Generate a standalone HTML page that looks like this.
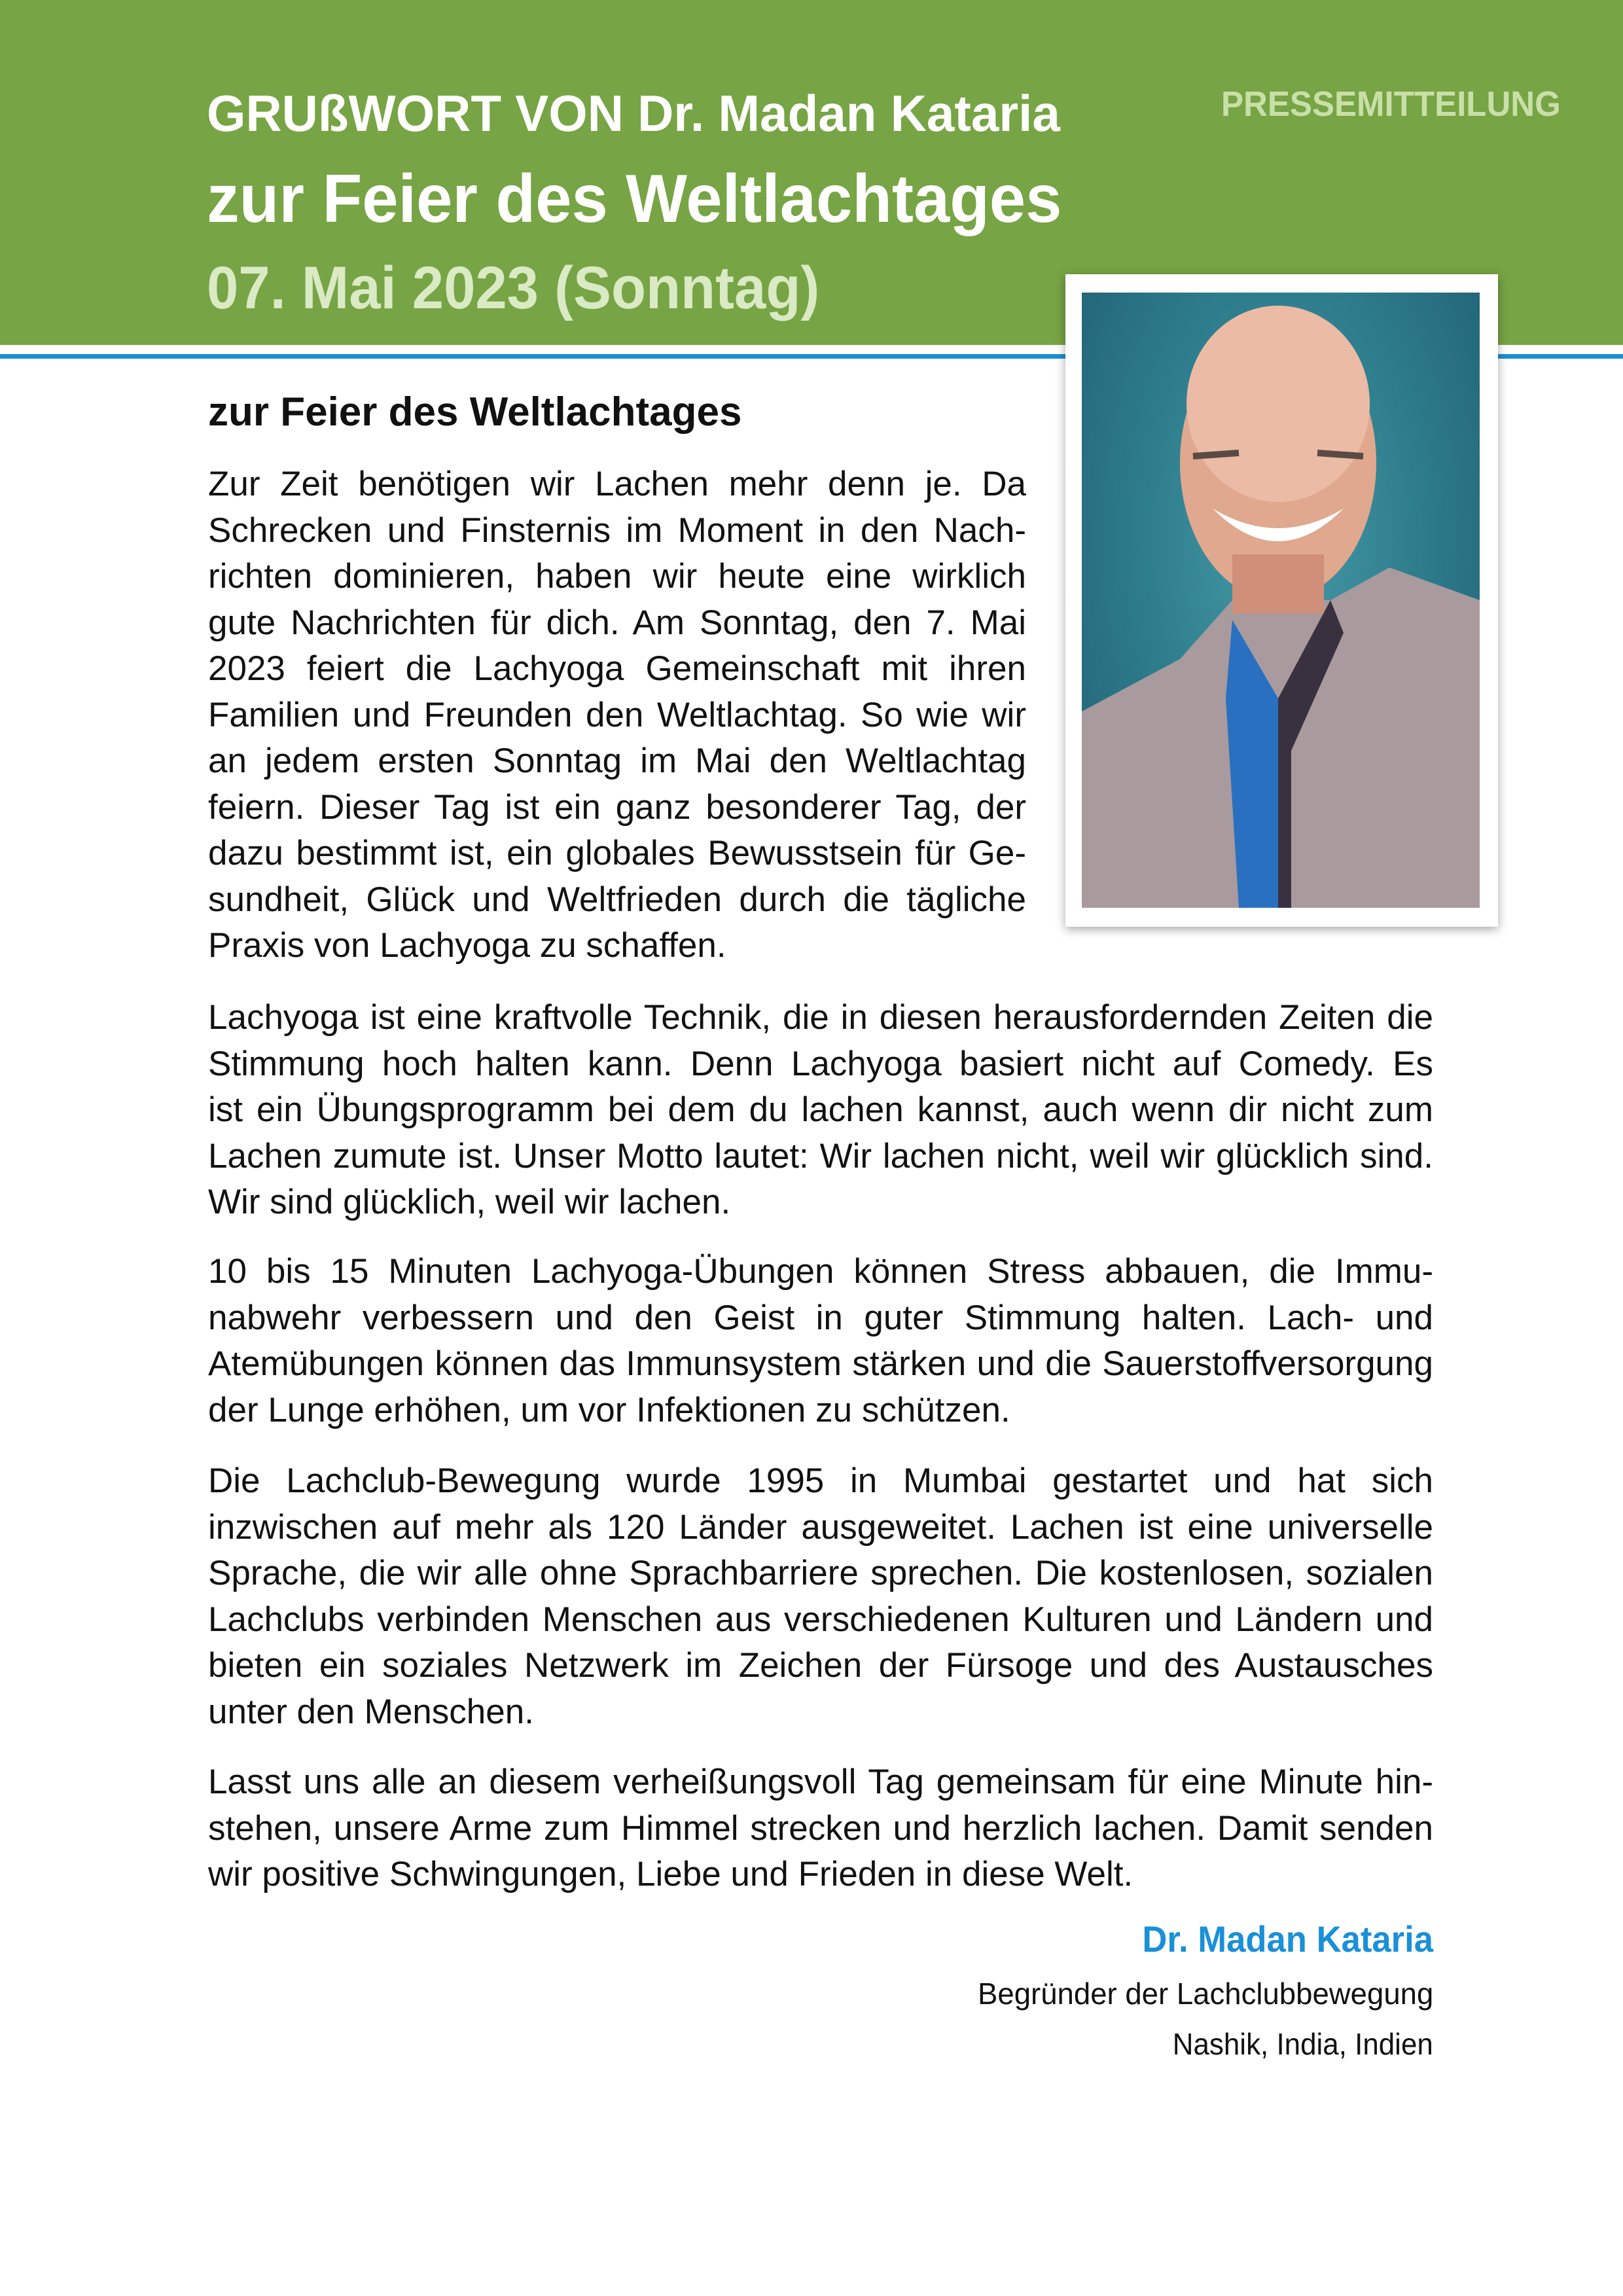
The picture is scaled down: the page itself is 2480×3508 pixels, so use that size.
<!DOCTYPE html>
<html><head><meta charset="utf-8"><style>
html,body{margin:0;padding:0;background:#fff}
body{width:2480px;height:3508px;position:relative;overflow:hidden;font-family:"Liberation Sans",Arial,sans-serif}
.green{position:absolute;left:0;top:0;width:2480px;height:527px;background:#77a444}
.blue{position:absolute;left:0;top:541px;width:2480px;height:7px;background:#1a8fd8}
.t{position:absolute;left:316px;font-weight:bold;white-space:nowrap;transform-origin:0 0}
.press{position:absolute;left:1866px;top:128px;font-weight:bold;font-size:54px;color:#c8e0a8;white-space:nowrap;transform-origin:0 0;transform:scaleX(0.945)}
.frame{position:absolute;left:1628px;top:419px;width:661px;height:997px;background:#fff;box-shadow:0 4px 14px rgba(0,0,0,0.35)}
.photo{position:absolute;left:25px;top:28px;width:608px;height:940px;background:radial-gradient(ellipse at 50% 40%,#4a9ca8 0%,#2f7f8f 45%,#1f5e72 100%);overflow:hidden}
.line{white-space:nowrap;text-align:justify;text-align-last:justify;height:70.5px;line-height:70.5px}
.last{text-align-last:left}
.col{position:absolute;left:318px;font-size:53px;color:#111}
</style></head><body>
<div class="green"></div>
<div class="blue"></div>
<div class="t" style="top:128px;font-size:78px;color:#fff;transform:scaleX(0.98)">GRUßWORT VON Dr. Madan Kataria</div>
<div class="t" style="top:245px;font-size:104px;color:#fff;transform:scaleX(0.955)">zur Feier des Weltlachtages</div>
<div class="t" style="top:388px;font-size:92px;color:#d9eac4;transform:scaleX(0.944)">07. Mai 2023 (Sonntag)</div>
<div class="press">PRESSEMITTEILUNG</div>

<div class="frame"><div class="photo">
<svg width="608" height="940" viewBox="0 0 608 940">
<path d="M0 640 L150 560 L230 470 L380 470 L470 420 L608 470 L608 940 L0 940Z" fill="#a99a9e"/>
<path d="M230 500 L300 620 L300 940 L240 940 L220 620Z" fill="#2a70c0"/>
<path d="M300 620 L380 470 L400 520 L320 700 L320 940 L300 940Z" fill="#3a3140"/>
<ellipse cx="300" cy="260" rx="150" ry="210" fill="#e0a88e"/>
<ellipse cx="300" cy="170" rx="140" ry="150" fill="#ebbba5"/>
<path d="M200 330 Q300 390 400 330 Q300 430 200 330Z" fill="#fff"/>
<path d="M170 250 L240 245 M360 245 L430 250" stroke="#5a4a44" stroke-width="10"/>
<rect x="230" y="400" width="140" height="90" fill="#cf8f78"/>
</svg>
</div></div>

<div class="col" style="top:594px;font-size:62px;font-weight:bold;">zur Feier des Weltlachtages</div>

<div class="col" style="top:705px;width:1250px">
<div class="line">Zur Zeit benötigen wir Lachen mehr denn je. Da</div>
<div class="line">Schrecken und Finsternis im Moment in den Nach-</div>
<div class="line">richten dominieren, haben wir heute eine wirklich</div>
<div class="line">gute Nachrichten für dich. Am Sonntag, den 7. Mai</div>
<div class="line">2023 feiert die Lachyoga Gemeinschaft mit ihren</div>
<div class="line">Familien und Freunden den Weltlachtag. So wie wir</div>
<div class="line">an jedem ersten Sonntag im Mai den Weltlachtag</div>
<div class="line">feiern. Dieser Tag ist ein ganz besonderer Tag, der</div>
<div class="line">dazu bestimmt ist, ein globales Bewusstsein für Ge-</div>
<div class="line">sundheit, Glück und Weltfrieden durch die tägliche</div>
<div class="line last">Praxis von Lachyoga zu schaffen.</div>
</div>

<div class="col" style="top:1520px;width:1872px">
<div class="line">Lachyoga ist eine kraftvolle Technik, die in diesen herausfordernden Zeiten die</div>
<div class="line">Stimmung hoch halten kann. Denn Lachyoga basiert nicht auf Comedy. Es</div>
<div class="line">ist ein Übungsprogramm bei dem du lachen kannst, auch wenn dir nicht zum</div>
<div class="line">Lachen zumute ist. Unser Motto lautet: Wir lachen nicht, weil wir glücklich sind.</div>
<div class="line last">Wir sind glücklich, weil wir lachen.</div>
</div>

<div class="col" style="top:1908px;width:1872px">
<div class="line">10 bis 15 Minuten Lachyoga-Übungen können Stress abbauen, die Immu-</div>
<div class="line">nabwehr verbessern und den Geist in guter Stimmung halten. Lach- und</div>
<div class="line">Atemübungen können das Immunsystem stärken und die Sauerstoffversorgung</div>
<div class="line last">der Lunge erhöhen, um vor Infektionen zu schützen.</div>
</div>

<div class="col" style="top:2228px;width:1872px">
<div class="line">Die Lachclub-Bewegung wurde 1995 in Mumbai gestartet und hat sich</div>
<div class="line">inzwischen auf mehr als 120 Länder ausgeweitet. Lachen ist eine universelle</div>
<div class="line">Sprache, die wir alle ohne Sprachbarriere sprechen. Die kostenlosen, sozialen</div>
<div class="line">Lachclubs verbinden Menschen aus verschiedenen Kulturen und Ländern und</div>
<div class="line">bieten ein soziales Netzwerk im Zeichen der Fürsoge und des Austausches</div>
<div class="line last">unter den Menschen.</div>
</div>

<div class="col" style="top:2688px;width:1872px">
<div class="line">Lasst uns alle an diesem verheißungsvoll Tag gemeinsam für eine Minute hin-</div>
<div class="line">stehen, unsere Arme zum Himmel strecken und herzlich lachen. Damit senden</div>
<div class="line last">wir positive Schwingungen, Liebe und Frieden in diese Welt.</div>
</div>

<div style="position:absolute;right:290px;top:2930px;font-size:56px;font-weight:bold;color:#1a90d8;white-space:nowrap;transform:scaleX(0.94);transform-origin:100% 0">Dr. Madan Kataria</div>
<div style="position:absolute;right:290px;top:3019px;font-size:46px;color:#111;white-space:nowrap;transform:scaleX(0.99);transform-origin:100% 0">Begründer der Lachclubbewegung</div>
<div style="position:absolute;right:290px;top:3096px;font-size:46px;color:#111;white-space:nowrap;transform:scaleX(0.955);transform-origin:100% 0">Nashik, India, Indien</div>
</body></html>
